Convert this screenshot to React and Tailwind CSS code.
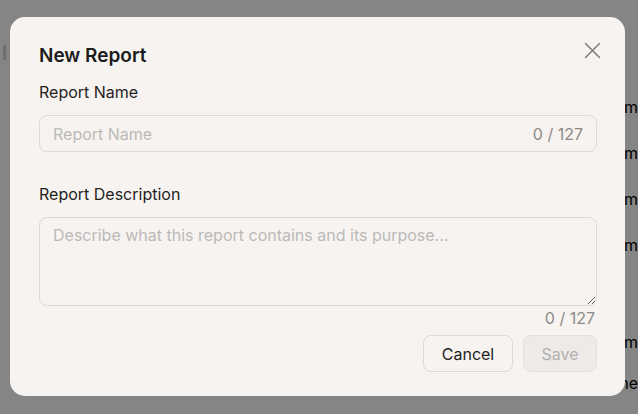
import React, { useState } from "react";

const font = { fontFamily: "Inter, 'Noto Sans', sans-serif" };

// rows of the page behind the modal, only their right edge shows
const rows = [
  { h: "h-[46px]", label: "me" },
  { h: "h-[46px]", label: "me" },
  { h: "h-[46px]", label: "me" },
  { h: "h-[46px]", label: "me" },
  { h: "h-[50px]", label: "" },
  { h: "h-[47px]", label: "me" },
];

function Background() {
  return (
    <div className="w-full h-[414px] bg-white overflow-hidden flex flex-col">
      <div className="h-[84px] flex items-start px-[3px] pt-[45px] shrink-0">
        <div className="w-[3px] h-[15px] bg-gray-300" />
      </div>
      {rows.map((r, i) => (
        <div key={i} className={`${r.h} flex items-center shrink-0`}>
          <span className="ml-[624px] text-[16px] text-black whitespace-nowrap">{r.label}</span>
        </div>
      ))}
      <div className="flex items-end pl-[16px] mt-[6px]">
        <span className="w-[62px] h-[24px] rounded bg-green-200 text-[14px] px-2 text-black">Tag</span>
        <span className="ml-[536px] text-[16px] text-black whitespace-nowrap">g me</span>
      </div>
    </div>
  );
}

export default function App() {
  const [name, setName] = useState("");
  const [desc, setDesc] = useState("");

  return (
    <div className="relative w-full h-[414px] overflow-hidden" style={font}>
      <Background />
      <div className="absolute inset-0 bg-black/[0.48]" />

      <div className="absolute left-[10px] top-[17px] w-[615px] h-[379px] rounded-[15px] bg-[#f7f3f0] pl-[29px] pr-[28px] pt-[25px] pb-[24px] flex flex-col">
        <button className="absolute right-[24px] top-[25px] text-[#7d7d7d]">
          <svg width="17" height="17" viewBox="0 0 17 17" fill="none" stroke="currentColor" strokeWidth="1.5" strokeLinecap="round">
            <path d="M1.5 1.5L15.5 15.5M15.5 1.5L1.5 15.5" />
          </svg>
        </button>

        <h2 className="text-[19px] leading-[28px] font-semibold text-[#1c1c1c]">New Report</h2>

        <label className="mt-[10px] text-[16px] leading-[24px] text-[#1f1f1f]">Report Name</label>
        <div className="mt-[11px] h-[37px] rounded-[8px] border border-[#dcd9d6] flex items-center pl-[13px] pr-[13px]">
          <input
            value={name}
            onChange={(e) => setName(e.target.value.slice(0, 127))}
            placeholder="Report Name"
            className="flex-1 bg-transparent outline-none text-[16px] text-[#1f1f1f] placeholder:text-[#bcbab8]"
          />
          <span className="text-[16px] text-[#8c8a88]">{name.length} / 127</span>
        </div>

        <label className="mt-[30px] text-[16px] leading-[24px] text-[#1f1f1f]">Report Description</label>
        <textarea
          value={desc}
          onChange={(e) => setDesc(e.target.value.slice(0, 127))}
          placeholder="Describe what this report contains and its purpose..."
          className="mt-[11px] h-[89px] rounded-[8px] border border-[#dcd9d6] bg-transparent outline-none px-[13px] py-[5px] text-[16px] leading-[24px] text-[#1f1f1f] placeholder:text-[#bcbab8] resize-y"
        />
        <div className="mt-[2px] text-right pr-[2px] text-[16px] leading-[20px] text-[#8c8a88]">{desc.length} / 127</div>

        <div className="mt-[7px] flex justify-end gap-[10px]">
          <button className="w-[90px] h-[37px] rounded-[8px] border border-[#dcd9d6] bg-[#f7f3f0] text-[16px] text-[#1f1f1f]">
            Cancel
          </button>
          <button disabled className="w-[74px] h-[37px] rounded-[8px] border border-[#e2dfdc] bg-[#edeae7] text-[16px] text-[#b3b1af]">
            Save
          </button>
        </div>
      </div>
    </div>
  );
}
